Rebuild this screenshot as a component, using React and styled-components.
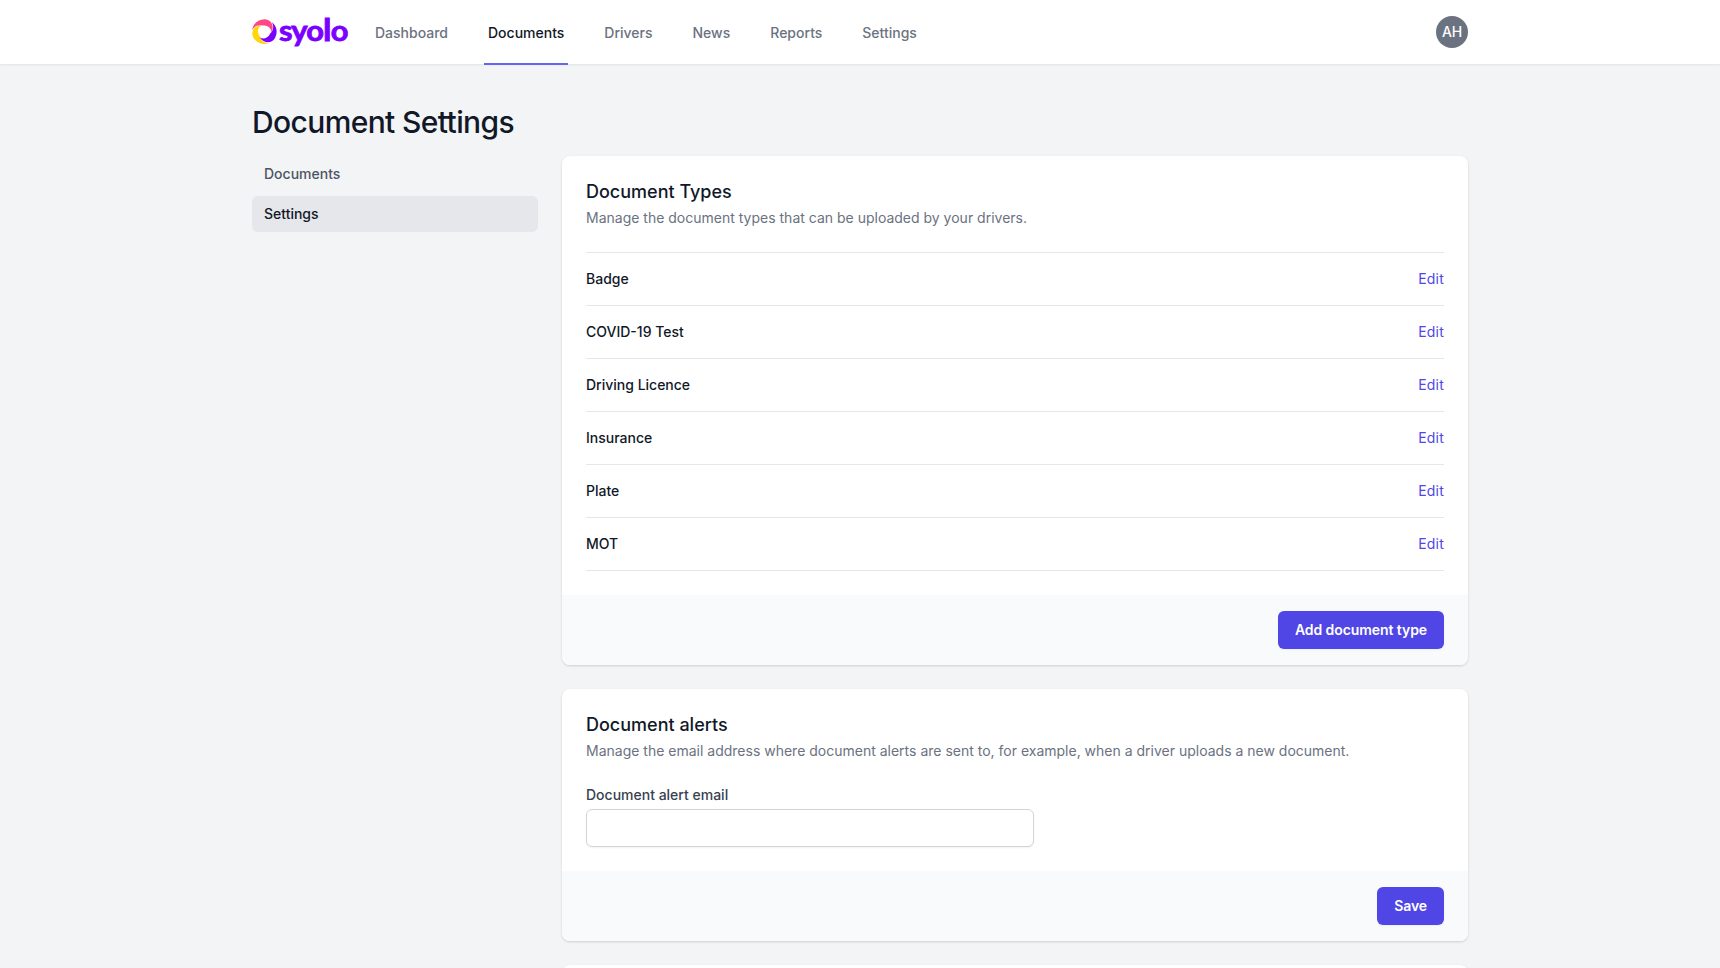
import React from "react";
import styled, { createGlobalStyle } from "styled-components";

const GlobalStyle = createGlobalStyle`
  *, *::before, *::after { box-sizing: border-box; }
  html { height: 100%; overflow: hidden; }
  body {
    margin: 0;
    height: 100%;
    overflow: hidden;
    background: #f3f4f6;
    color: #111827;
    font-family: Inter, "Liberation Sans", sans-serif;
    font-size: 14px;
    line-height: 20px;
    -webkit-font-smoothing: antialiased;
  }
  h1, h2, p { margin: 0; }
  a { color: inherit; text-decoration: none; }
`;

const Header = styled.header`
  height: 64px;
  background: #fff;
  box-shadow: 0 1px 2px rgba(0, 0, 0, 0.07);
`;

const Container = styled.div`
  width: 1216px;
  margin: 0 auto;
`;

const HeaderBar = styled(Container)`
  height: 100%;
  display: flex;
  align-items: center;
`;

const LogoSvg = styled.svg`
  display: block;
  flex: none;
  width: 95px;
  height: 32px;
  overflow: visible;
`;

const Wordmark = styled.text`
  fill: #7a00ff;
  stroke: #7a00ff;
  stroke-width: 0.8px;
  font-family: Lato, sans-serif;
  font-size: 28px;
  font-weight: 700;
  letter-spacing: -0.8px;
`;

const TallLetter = styled.tspan`
  font-size: 31px;
`;

const Nav = styled.nav`
  display: flex;
  align-self: stretch;
  gap: 32px;
  margin: 0 0 -1px 24px;
`;

const NavLink = styled.a`
  display: flex;
  align-items: center;
  padding: 3px 4px 0;
  border-bottom: 2px solid ${(p) => (p.$active ? "#6366f1" : "transparent")};
  color: ${(p) => (p.$active ? "#111827" : "#6b7280")};
  font-weight: 500;
`;

const Avatar = styled.div`
  width: 32px;
  height: 32px;
  margin-left: auto;
  display: flex;
  align-items: center;
  justify-content: center;
  border-radius: 50%;
  background: #6b7280;
  color: #fff;
  font-weight: 500;
  letter-spacing: -0.3px;
`;

const Main = styled(Container)`
  padding-top: 40px;
`;

const PageTitle = styled.h1`
  margin-bottom: 16px;
  font-size: 30px;
  line-height: 36px;
  font-weight: 500;
  letter-spacing: -0.62px;
`;

const Columns = styled.div`
  display: grid;
  grid-template-columns: 286px 906px;
  gap: 24px;
`;

const SideNav = styled.nav`
  display: flex;
  flex-direction: column;
  gap: 4px;
`;

const SideLink = styled.a`
  padding: 8px 12px;
  border-radius: 6px;
  background: ${(p) => (p.$active ? "#e5e7eb" : "transparent")};
  color: ${(p) => (p.$active ? "#111827" : "#4b5563")};
  font-weight: 500;
`;

const Stack = styled.div`
  display: flex;
  flex-direction: column;
  gap: 24px;
`;

const Card = styled.section`
  border-radius: 8px;
  background: #fff;
  overflow: hidden;
  box-shadow: 0 1px 3px rgba(0, 0, 0, 0.1), 0 1px 2px rgba(0, 0, 0, 0.06);
`;

const CardBody = styled.div`
  padding: 24px;
`;

const CardTitle = styled.h2`
  font-size: 18px;
  line-height: 24px;
  font-weight: 500;
`;

const CardText = styled.p`
  margin-top: 4px;
  color: #6b7280;
`;

const CardFooter = styled.div`
  display: flex;
  justify-content: flex-end;
  padding: 16px 24px;
  background: #f9fafb;
`;

const Button = styled.button`
  padding: 8px 16px;
  border: 1px solid transparent;
  border-radius: 6px;
  background: #4f46e5;
  box-shadow: 0 1px 2px rgba(0, 0, 0, 0.05);
  color: #fff;
  font: 600 14px/20px Inter, "Liberation Sans", sans-serif;
  letter-spacing: -0.08px;
`;

const TypeList = styled.div`
  margin-top: 24px;
  border-top: 1px solid #e5e7eb;
`;

const TypeRow = styled.div`
  display: flex;
  justify-content: space-between;
  padding: 16px 0;
  border-bottom: 1px solid #e5e7eb;
`;

const TypeName = styled.span`
  font-weight: 500;
`;

const EditLink = styled.a`
  color: #4f46e5;
  letter-spacing: 0.2px;
`;

const Label = styled.label`
  display: block;
  margin-top: 24px;
  color: #374151;
  font-weight: 500;
`;

const Input = styled.input`
  display: block;
  width: 448px;
  height: 38px;
  margin-top: 4px;
  padding: 8px 12px;
  border: 1px solid #d1d5db;
  border-radius: 6px;
  background: #fff;
  box-shadow: 0 1px 2px rgba(0, 0, 0, 0.05);
  font: inherit;
`;

const navItems = ["Dashboard", "Documents", "Drivers", "News", "Reports", "Settings"];
const sideItems = ["Documents", "Settings"];
const documentTypes = ["Badge", "COVID-19 Test", "Driving Licence", "Insurance", "Plate", "MOT"];

const blade =
  "M0.2 14.2 C1 7.4 6.4 3.3 12.6 3.3 C19.4 3.4 22.8 10.2 19.4 17 A7 7 0 0 0 11 9.6 C7 8.6 2.8 9.4 0.2 14.2 Z";

function Logo() {
  return (
    <LogoSvg viewBox="0 0 95 32" role="img" aria-label="syolo">
      <path d={blade} fill="#ffd60a" transform="rotate(240 12.3 15.7)" />
      <path d={blade} fill="#7a00ff" transform="rotate(120 12.3 15.7)" />
      <path d={blade} fill="#ff4785" />
      <Wordmark x="27" y="24.8" textLength="68.6" lengthAdjust="spacingAndGlyphs">
        syo<TallLetter>l</TallLetter>o
      </Wordmark>
    </LogoSvg>
  );
}

export default function App() {
  return (
    <>
      <GlobalStyle />
      <Header>
        <HeaderBar>
          <Logo />
          <Nav>
            {navItems.map((item) => (
              <NavLink key={item} href="#" $active={item === "Documents"}>{item}</NavLink>
            ))}
          </Nav>
          <Avatar>AH</Avatar>
        </HeaderBar>
      </Header>
      <Main as="main">
        <PageTitle>Document Settings</PageTitle>
        <Columns>
          <SideNav>
            {sideItems.map((item) => (
              <SideLink key={item} href="#" $active={item === "Settings"}>{item}</SideLink>
            ))}
          </SideNav>
          <Stack>
            <Card>
              <CardBody>
                <CardTitle>Document Types</CardTitle>
                <CardText>Manage the document types that can be uploaded by your drivers.</CardText>
                <TypeList>
                  {documentTypes.map((name) => (
                    <TypeRow key={name}>
                      <TypeName>{name}</TypeName>
                      <EditLink href="#">Edit</EditLink>
                    </TypeRow>
                  ))}
                </TypeList>
              </CardBody>
              <CardFooter>
                <Button>Add document type</Button>
              </CardFooter>
            </Card>
            <Card>
              <CardBody>
                <CardTitle>Document alerts</CardTitle>
                <CardText>Manage the email address where document alerts are sent to, for example, when a driver uploads a new document.</CardText>
                <Label htmlFor="alert-email">Document alert email</Label>
                <Input id="alert-email" type="email" />
              </CardBody>
              <CardFooter>
                <Button>Save</Button>
              </CardFooter>
            </Card>
            <Card>
              <CardBody />
            </Card>
          </Stack>
        </Columns>
      </Main>
    </>
  );
}
